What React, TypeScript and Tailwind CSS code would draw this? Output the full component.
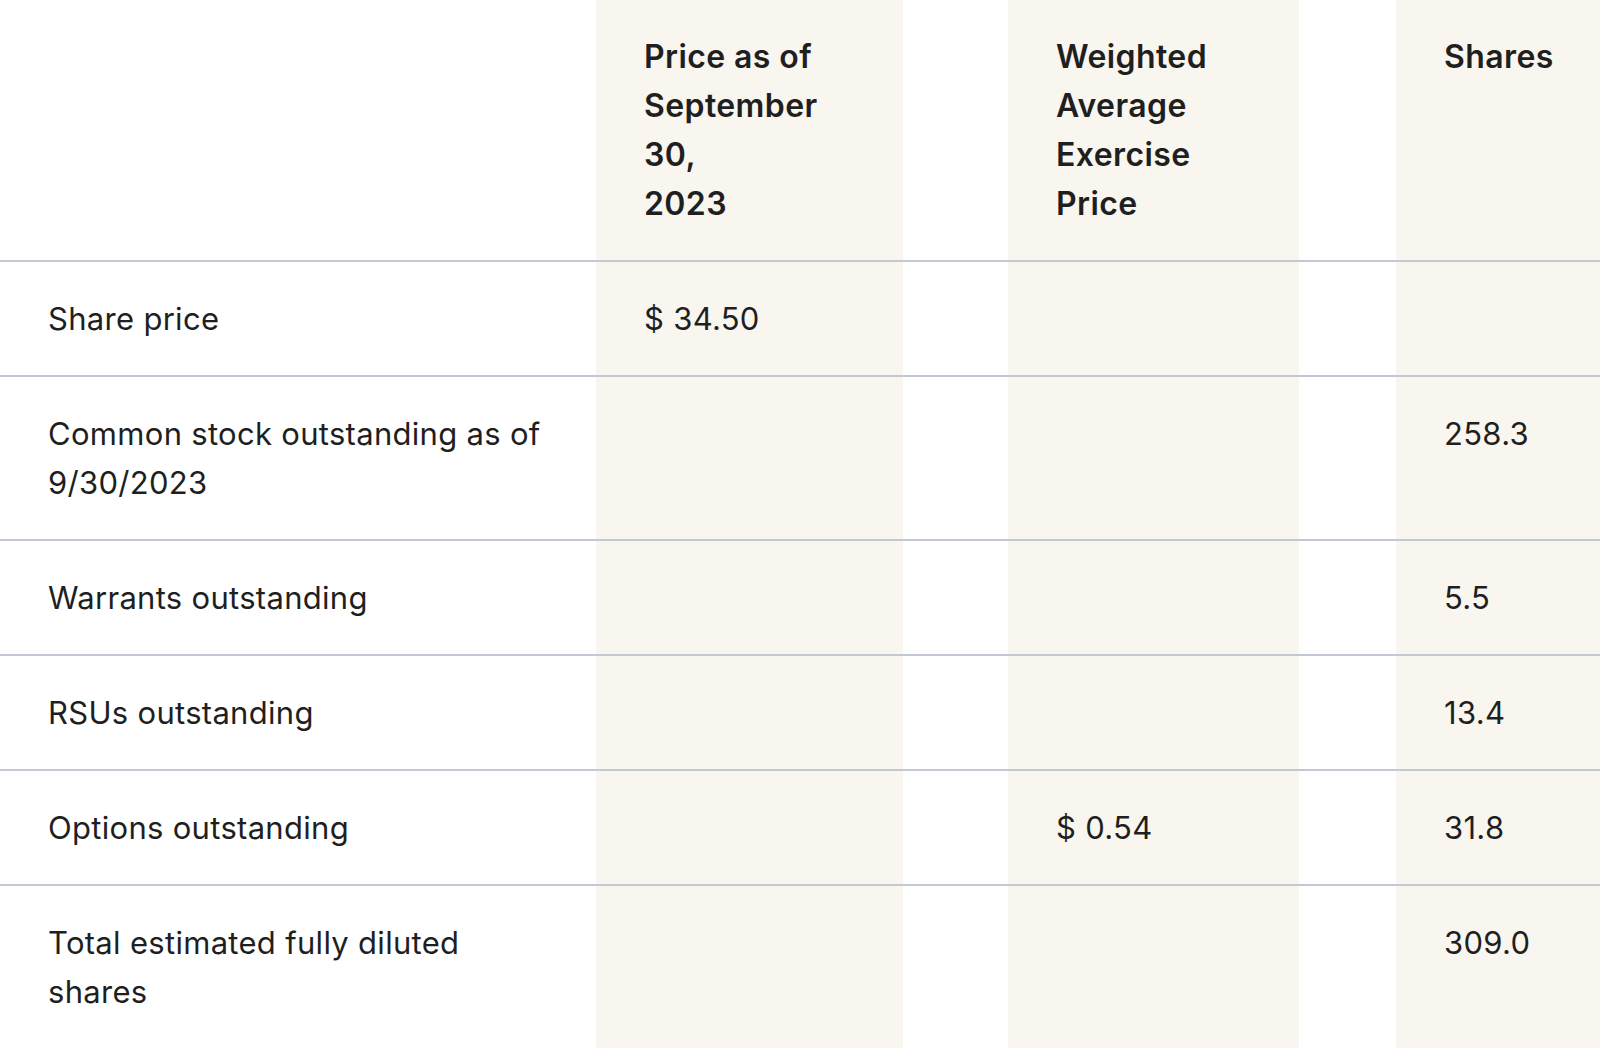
import React from 'react';

interface Row {
  label: string;
  price?: string;
  exercise?: string;
  shares?: string;
}

const rows: Row[] = [
  { label: 'Share price', price: '$ 34.50' },
  { label: 'Common stock outstanding as of 9/30/2023', shares: '258.3' },
  { label: 'Warrants outstanding', shares: '5.5' },
  { label: 'RSUs outstanding', shares: '13.4' },
  { label: 'Options outstanding', exercise: '$ 0.54', shares: '31.8' },
  { label: 'Total estimated fully diluted shares', shares: '309.0' },
];

const cell = 'px-12 py-8 align-top text-left';
const shaded = 'bg-[#f9f6ef]';
const head = 'text-[32px] tracking-[0.4px] font-semibold';

const App: React.FC = () => {
  return (
    <div className="min-h-screen bg-white text-[#1f1f1f] font-['Inter',sans-serif]">
      <table className="w-full border-collapse table-fixed text-[31px] leading-[49px] tracking-[0.3px]">
        <colgroup>
          <col className="w-[596px]" />
          <col className="w-[307px]" />
          <col className="w-[105px]" />
          <col className="w-[291px]" />
          <col className="w-[97px]" />
          <col />
        </colgroup>
        <thead>
          <tr className="border-b-2 border-[#c3c9d4]">
            <th className={cell}></th>
            <th className={`${cell} ${shaded} ${head}`}>
              Price as of
              <br />
              September
              <br />
              30,
              <br />
              2023
            </th>
            <th></th>
            <th className={`${cell} ${shaded} ${head}`}>
              Weighted
              <br />
              Average
              <br />
              Exercise
              <br />
              Price
            </th>
            <th></th>
            <th className={`${cell} ${shaded} ${head}`}>Shares</th>
          </tr>
        </thead>
        <tbody>
          {rows.map((row) => (
            <tr key={row.label} className="border-b-2 border-[#c3c9d4]">
              <td className={`${cell} font-normal`}>
                <div className="max-w-[506px]">{row.label}</div>
              </td>
              <td className={`${cell} ${shaded}`}>{row.price}</td>
              <td></td>
              <td className={`${cell} ${shaded}`}>{row.exercise}</td>
              <td></td>
              <td className={`${cell} ${shaded}`}>{row.shares}</td>
            </tr>
          ))}
        </tbody>
      </table>
    </div>
  );
};

export default App;
